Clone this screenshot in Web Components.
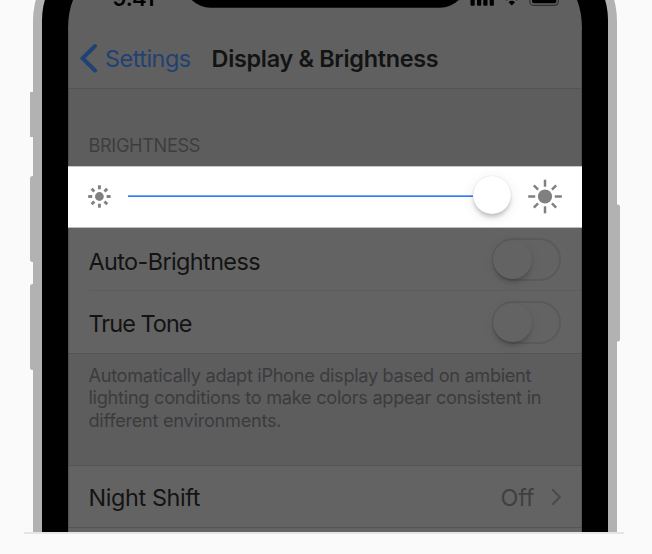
<!DOCTYPE html>
<html lang="en">
<head>
<meta charset="utf-8">
<title>Display &amp; Brightness</title>
<style>
html,body{margin:0;width:652px;height:554px;overflow:hidden;background:#fafafa}
body{font-family:Inter,"Liberation Sans",sans-serif;color:#131313}
</style>
</head>
<body>
<phone-frame>
  <settings-nav></settings-nav>
  <group-title><fit-text w="111">BRIGHTNESS</fit-text></group-title>
  <brightness-slider></brightness-slider>
  <settings-row class="inset"><fit-text w="171">Auto-Brightness</fit-text><toggle-switch slot="end"></toggle-switch></settings-row>
  <settings-row class="mid"><fit-text w="103">True Tone</fit-text><toggle-switch slot="end"></toggle-switch></settings-row>
  <group-note>
    <fit-text w="442">Automatically adapt iPhone display based on ambient</fit-text>
    <fit-text w="452">lighting conditions to make colors appear consistent in</fit-text>
    <fit-text w="192">different environments.</fit-text>
  </group-note>
  <settings-row class="last"><fit-text w="111">Night Shift</fit-text><row-value slot="end"><fit-text w="33">Off</fit-text></row-value></settings-row>
</phone-frame>
<script>
function define(name, html, ready) {
  customElements.define(name, class extends HTMLElement {
    constructor() {
      super();
      this.attachShadow({ mode: "open" }).innerHTML = html;
    }
    connectedCallback() { if (ready) ready(this); }
  });
}

define("status-bar", `<style>
:host{display:block;height:8px;position:relative;overflow:hidden;color:#000}
fit-text{position:absolute;left:45px;top:-16px;font-size:22px;line-height:28px;font-weight:600}
svg{position:absolute;left:0;top:0;width:514px;height:8px}
</style><fit-text w="41">9:41</fit-text>
<svg viewBox="68 0 514 8"><rect x="184.5" y="-50" width="281.5" height="57.8" rx="26"/>
<g><rect x="470.5" y="-4" width="4.2" height="9.7" rx="1"/><rect x="477" y="-4" width="4.2" height="9.7" rx="1"/><rect x="483.3" y="-4" width="4.2" height="9.7" rx="1"/><rect x="489.7" y="-4" width="4.2" height="9.7" rx="1"/></g>
<path d="M508.6 2.2Q511.8-.5 515 2.2L511.8 5.5Z"/><path d="M506.3 .2Q511.8-4.3 517.3 .2" fill="none" stroke="#000" stroke-width="1.2"/>
<rect x="529.8" y="-8" width="28.5" height="13.4" rx="4" fill="none" stroke="#303030" stroke-width="1.2"/><rect x="532" y="-6" width="24.3" height="9.2" rx="2"/></svg>`);

define("settings-nav", `<style>
:host{display:flex;flex-direction:column;height:88px;background:#606060;border-bottom:1px solid #545454}
nav{display:flex;align-items:center;height:60px;padding:20px 0 0 12px}
svg{width:18px;height:30px;margin-right:7.6px}
fit-text{font-size:23.4px;line-height:28px;margin-top:1px}
.back{color:#204173}
.title{margin-left:21px;font-weight:600}
</style><status-bar></status-bar>
<nav><svg viewBox="0 0 18 30"><path d="M15 3L2.6 15.2L15 27.5" fill="none" stroke="#204173" stroke-width="4" stroke-linecap="round"/></svg>
<fit-text class="back" w="85">Settings</fit-text><fit-text class="title" w="226">Display &amp; Brightness</fit-text></nav>`);

define("group-title", `<style>
:host{display:flex;align-items:flex-end;height:77px;box-sizing:border-box;padding:0 0 9px 21px;background:#5d5d5d;color:#3d3d3f;font-size:18.2px;line-height:24px}
</style><slot></slot>`);

define("sun-icon", `<style>:host{display:block}svg{display:block;width:36px;height:36px;overflow:visible}</style>
<svg viewBox="-18 -18 36 36"><g fill="#808080" stroke="#808080"></g></svg>`, el => {
  const big = el.hasAttribute("large");
  const r = big ? 7.1 : 4.4, from = big ? 9.8 : 7.2, to = big ? 16.8 : 11.2, d = big ? 15.8 : 11;
  const shift = big ? "0 -.5" : ".4 -.5";
  let out = `<circle r="${r}" stroke="none"/>`;
  for (let i = 0; i < 8; i++) {
    out += `<path stroke-width="${big ? 2.5 : 2.9}" transform="rotate(${i * 45})" d="M0 ${from}V${i % 2 ? d : to}"/>`;
  }
  const g = el.shadowRoot.querySelector("g");
  g.setAttribute("transform", `translate(${shift})`);
  g.innerHTML = out;
});

define("brightness-slider", `<style>
:host{display:flex;align-items:center;height:62px;box-sizing:border-box;padding:0 19px 0 13px;background:#fff;border-top:1px solid #c9c9c9;border-bottom:1px solid #bdbdbd}
.track{flex:1;display:flex;align-items:center;margin:-3px 16px 0 11px}
.line{flex:1;height:2px;margin-top:1px;background:linear-gradient(#76a8fa 50%,#3479f5 50%)}
.knob{width:38px;height:38px;margin-top:-1px;border-radius:50%;background:#fff;box-shadow:0 4px 4px -1px #0003,0 3px 14px #00000016,0 0 1px #0003}
</style><sun-icon></sun-icon><div class="track"><div class="line"></div><div class="knob"></div></div><sun-icon large></sun-icon>`);

define("toggle-switch", `<style>
:host{display:block;width:69px;height:43px;box-sizing:border-box;border:2px solid #5a5a5a;border-radius:22px}
div{width:38.5px;height:38.5px;margin:.2px 0 0 -.8px;border-radius:50%;background:#636363;box-shadow:0 4px 4px -1px #00000030,0 3px 14px #0000000c,0 0 1px #00000010}
</style><div></div>`);

define("settings-row", `<style>
:host{display:flex;align-items:center;justify-content:space-between;height:63px;box-sizing:border-box;padding:1px 21px 0;background:#636363;border-bottom:1px solid #545454;font-size:23.4px;line-height:28px}
:host(.inset){border-bottom-color:transparent;background:linear-gradient(#5c5c5c,#5c5c5c) 21px 100%/100% 1px no-repeat border-box,#636363}
:host(.mid){--drop:2.5px}
:host(.last){height:62px;--drop:2px}
::slotted(fit-text),::slotted(row-value){margin-top:var(--drop,4px)}
</style><slot></slot><slot name="end"></slot>`);

define("group-note", `<style>
:host{display:block;height:112px;box-sizing:border-box;padding:9.9px 21px 0;background:#5d5d5d;border-bottom:1px solid #545454;color:#3b3b3d;font-size:18.2px;line-height:22.5px}
</style><slot></slot>`);

define("row-value", `<style>
:host{display:flex;align-items:center;color:#3f3f41}
svg{width:10px;height:18px;margin:-3px 0 0 16.5px}
</style><slot></slot><svg viewBox="0 0 10 18"><path d="M1.2 1.2L8.8 9L1.2 16.8" fill="none" stroke="#4b4b4d" stroke-width="2.2"/></svg>`);

define("phone-frame", `<style>
:host{display:block;position:relative;width:652px;height:554px;overflow:hidden}
.stage{position:relative;height:532px;overflow:hidden}
svg{position:absolute;inset:0}
.screen{position:relative;box-sizing:border-box;width:514px;height:532px;margin:0 auto 0 68px;background:#636363;overflow:hidden}
.corners{z-index:2}
.floor{width:600px;height:2px;margin-left:24px;background:#e5e5e5}
</style>
<div class="stage">
<svg width="652" height="532"><g fill="#b2b2b2"><rect x="30" y="92" width="8" height="45"/><rect x="30" y="176" width="8" height="86" rx="2.5"/><rect x="30" y="284" width="8" height="86" rx="2.5"/><rect x="612" y="204.5" width="8" height="137" rx="2.5"/><rect x="33" y="-59" width="584" height="800" rx="80"/></g><rect x="42" y="-50" width="566" height="800" rx="70"/></svg>
<div class="screen"><slot></slot></div>
<svg class="corners" width="652" height="532"><path d="M68 0H73Q68 12 68 30ZM582 0H577Q582 12 582 30Z"/><path d="M68.5 30V166M581.5 30V166M68.5 228V532M581.5 228V532" stroke="#000" stroke-opacity=".15"/></svg>
</div><div class="floor"></div>`);

/* Spreads a line of text over the width in the w attribute. Defined last, so that
   the font size set by each surrounding element is already in force. */
define("fit-text", `<style>:host{display:block;width:max-content;white-space:nowrap}span{display:inline-block}</style><span><slot></slot></span>`, el => {
  const span = el.shadowRoot.querySelector("span");
  const target = Number(el.getAttribute("w")) + 1;
  const gaps = Math.max(1, el.textContent.length - 1);
  const spacing = (target - span.getBoundingClientRect().width) / gaps;
  span.style.letterSpacing = spacing + "px";
  span.style.marginLeft = "-.5px";
  span.style.marginRight = -spacing + "px";
});
</script>
</body>
</html>
